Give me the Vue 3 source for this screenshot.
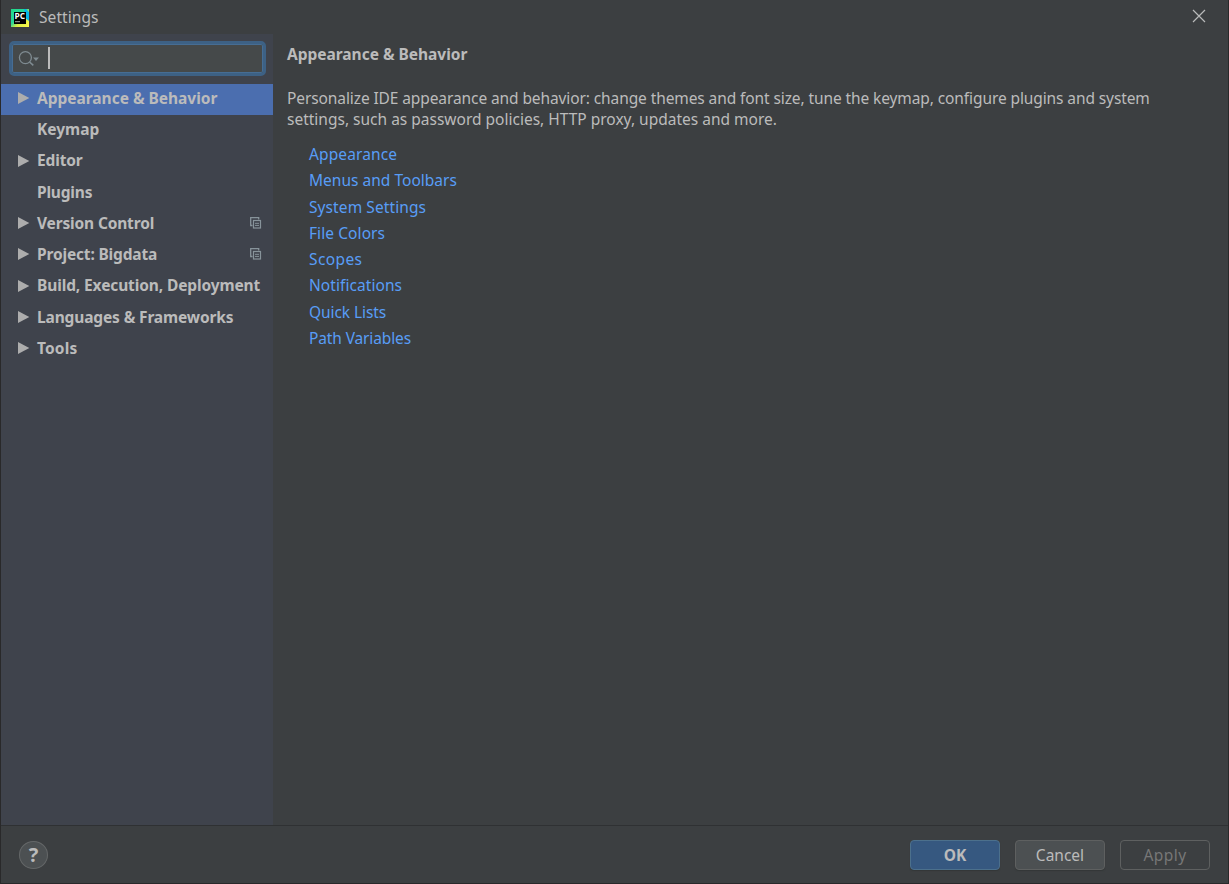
<script setup>
const tree = [
  { label: 'Appearance & Behavior', arrow: true, selected: true, spacing: -0.02 },
  { label: 'Keymap', spacing: 0 },
  { label: 'Editor', arrow: true, spacing: -0.15 },
  { label: 'Plugins', spacing: -0.2 },
  { label: 'Version Control', arrow: true, project: true, spacing: -0.16 },
  { label: 'Project: Bigdata', arrow: true, project: true, spacing: -0.16 },
  { label: 'Build, Execution, Deployment', arrow: true, spacing: -0.12 },
  { label: 'Languages & Frameworks', arrow: true, spacing: -0.14 },
  { label: 'Tools', arrow: true, spacing: 0.15 },
]
const links = [
  { label: 'Appearance', spacing: 0.12 },
  { label: 'Menus and Toolbars', spacing: 0.02 },
  { label: 'System Settings', spacing: 0.09 },
  { label: 'File Colors', spacing: 0.08 },
  { label: 'Scopes', spacing: 0.4 },
  { label: 'Notifications', spacing: 0.07 },
  { label: 'Quick Lists', spacing: -0.08 },
  { label: 'Path Variables', spacing: -0.13 },
]
const track = (entry) => ({ letterSpacing: entry.spacing + 'px' })
</script>

<template>
  <div class="window">
    <header class="titlebar">
      <svg class="logo" width="18" height="18" viewBox="0 0 18 18">
        <defs>
          <linearGradient id="brand" x1="0" y1="0" x2="1" y2="1">
            <stop offset="0" stop-color="#21d789" />
            <stop offset=".42" stop-color="#27d89a" />
            <stop offset=".62" stop-color="#d8ed45" />
            <stop offset="1" stop-color="#fcf84a" />
          </linearGradient>
        </defs>
        <rect width="18" height="18" fill="url(#brand)" />
        <path d="M13 0h2l3 3v9l-4-3z" fill="#07b8e8" />
        <rect x="3" y="3" width="12" height="12" fill="#000" />
        <text x="3.4" y="9.900" class="logo-text" textLength="10.6" lengthAdjust="spacingAndGlyphs">PC</text>
        <rect x="4" y="12.200" width="5" height="1" fill="#aaa" />
      </svg>
      <span class="title">Settings</span>
      <svg class="close" width="14" height="14" viewBox="0 0 14 14"><path d="M1 1l12 12M13 1L1 13" stroke="#b9baba" stroke-width="1.2" /></svg>
    </header>
    <div class="body">
      <aside class="sidebar">
        <div class="search">
          <svg width="24" height="20" viewBox="0 0 24 20">
            <circle cx="7.4" cy="8.6" r="6" fill="none" stroke="#7f8b91" stroke-width="1.3" />
            <path d="M11.600 13l3.700 3.400" stroke="#7f8b91" stroke-width="1.6" />
            <path d="M15 8.500h6L18 12z" fill="#7f8b91" />
          </svg>
          <i class="caret"></i>
        </div>
        <nav class="tree">
          <div v-for="item in tree" :key="item.label" class="node" :class="{ selected: item.selected }">
            <svg class="arrow" width="12" height="12" viewBox="0 0 12 12"><path v-if="item.arrow" d="M0 0L11.300 6L0 12z" fill="#adadad" /></svg>
            <span class="label" :style="track(item)">{{ item.label }}</span>
            <svg v-if="item.project" class="project" width="12" height="12" viewBox="0 0 12 12">
              <path d="M2.500 8.500H.7V.7h8V2.500" fill="none" stroke="#87939a" stroke-width="1.3" />
              <rect x="3.500" y="3.500" width="7" height="7.500" fill="none" stroke="#87939a" stroke-width="1.200" />
              <path d="M5 6.300h4M5 8.400h4" stroke="#87939a" stroke-width="1" />
            </svg>
          </div>
        </nav>
      </aside>
      <main class="content">
        <h1>Appearance &amp; Behavior</h1>
        <p><span class="first">Personalize IDE appearance and behavior: change themes and font size, tune the keymap, configure plugins and system</span><br><span>settings, such as password policies, HTTP proxy, updates and more.</span></p>
        <ul>
          <li v-for="link in links" :key="link.label"><a :style="track(link)">{{ link.label }}</a></li>
        </ul>
      </main>
    </div>
    <footer class="footer">
      <button class="help">?</button>
      <div class="actions">
        <button class="btn ok">OK</button>
        <button class="btn">Cancel</button>
        <button class="btn disabled">Apply</button>
      </div>
    </footer>
  </div>
</template>

<style>
body { background: #3c3f41; }
</style>
<style scoped>
* { box-sizing: border-box; }
.window { width: 1229px; height: 884px; display: flex; flex-direction: column; background: #3c3f41; border: solid #29292a; border-width: 0 1px 1px; color: #bbb; font: 15.5px/21px "Noto Sans", "Open Sans", sans-serif; overflow: hidden; }
.titlebar { height: 34px; flex: none; display: flex; align-items: center; padding: 1px 22px 0 10px; }
.logo-text { font: bold 8.5px "Open Sans", sans-serif; fill: #fff; }
.title { margin-left: 10px; letter-spacing: .08px; }
.close { margin: -3px 0 0 auto; }
.body { flex: 1; min-height: 0; display: flex; }
.sidebar { width: 272px; background: #3f434c; padding-top: 7px; }
.search { width: 257px; height: 35px; margin-left: 8px; border: 3px solid #3d6185; border-radius: 5px; background: #45494a; display: flex; align-items: center; padding-left: 6px; box-shadow: inset 0 0 0 1px #466d94; }
.caret { width: 2px; height: 22px; margin: -1px 0 0 6px; background: #bbb; }
.tree { margin-top: 8px; }
.node { height: 31.250px; display: flex; align-items: center; padding: 0 11px 0 17px; font-weight: 700; white-space: nowrap; }
.selected { background: #4b6eaf; }
.arrow { flex: none; margin-top: -3px; }
.label { margin: -2.5px 0 0 7px; }
.project { margin: -3px 0 0 auto; }
.content { flex: 1; padding: 10px 0 0 14px; }
h1 { margin: 0; font-size: 15.5px; line-height: 21px; letter-spacing: -.02px; }
p { margin: 23px 0 0; white-space: nowrap; }
.first { letter-spacing: -.1px; }
ul { margin: 14px 0 0; padding: 0 0 0 22px; list-style: none; }
li { height: 26.250px; color: #589df6; }
.footer { height: 58px; flex: none; border-top: 1px solid #2f3133; display: flex; align-items: center; justify-content: space-between; padding: 1px 18px 0; }
.help { width: 29px; height: 28px; padding: 0; border: 1px solid #646768; border-radius: 50%; background: #4c5052; color: #bbb; font: bold 20px/26px "Noto Sans", sans-serif; }
.actions { display: flex; gap: 15px; }
.btn { width: 90px; height: 30px; padding: 0; border: 1px solid #5e6060; border-radius: 4px; background: #4c5052; color: #bbb; font: 15.5px/26px "Noto Sans", sans-serif; box-shadow: 0 1px 1px #343738; }
.ok { background: #365880; border-color: #4c708c; font-weight: 700; }
.disabled { background: transparent; color: #777; box-shadow: none; letter-spacing: .4px; }
</style>
